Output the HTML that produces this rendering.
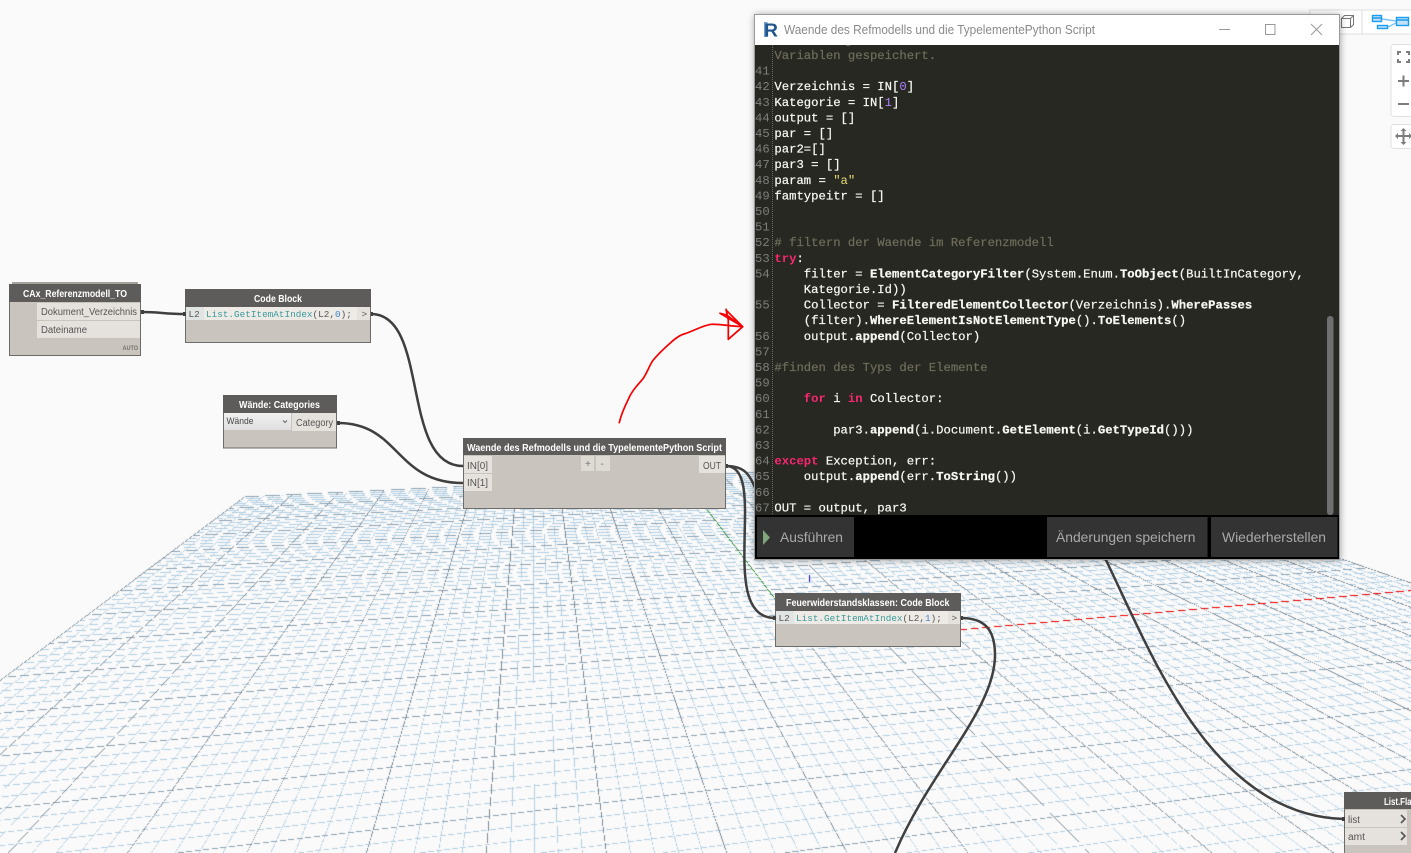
<!DOCTYPE html>
<html lang="de">
<head>
<meta charset="utf-8">
<title>Dynamo Python Script</title>
<style>
html,body{margin:0;padding:0;width:1411px;height:853px;overflow:hidden;background:#fafafa}
canvas,svg{position:absolute;left:0;top:0;display:block}
svg text{font-family:"Liberation Sans",sans-serif;white-space:pre}
.t{font-size:10px;font-weight:bold;fill:#fff}
.p{font-size:10px;fill:#555}
.m{font-family:"Liberation Mono",monospace!important;font-size:9.36px}
.c{font-family:"Liberation Mono",monospace!important;font-size:12.25px;fill:#f8f8f2;stroke:#f8f8f2;stroke-width:.22}
.b{font-weight:bold}
.n{fill:#7e7e7c;stroke:none}
.g{fill:#6e6c5a;stroke:#6e6c5a}
.k{fill:#f92672;stroke:none;font-weight:bold}
.v{fill:#ae81ff;stroke:none}
.s{fill:#e6db74;stroke:none}
.y{fill:#3a9a9a}
.u{fill:#3f87c4}
.btn{font-size:14px;fill:#aaa}
</style>
</head>
<body>
<canvas id="g" width="1411" height="853"></canvas>
<svg width="1411" height="853" viewBox="0 0 1411 853" xmlns="http://www.w3.org/2000/svg">
<defs>
<filter id="sh" x="-5%" y="-5%" width="110%" height="110%"><feGaussianBlur stdDeviation="4"/></filter>
<clipPath id="ed"><rect x="755" y="45" width="584" height="470"/></clipPath>
<linearGradient id="dd" x1="0" y1="0" x2="0" y2="1"><stop offset="0" stop-color="#f1f1f1"/><stop offset="1" stop-color="#dfdfdf"/></linearGradient>
</defs>

<!-- wires -->
<g fill="none" stroke="#3f3f3f" stroke-width="2.5">
<path d="M142,312 C160,312 165,314 185,314"/>
<path d="M371,314 C430,314 400,466 463,466"/>
<path d="M338,423 C400,423 395,483 463,483"/>
<path d="M726,466 C770,466 715,618 775,618"/>
<path d="M726,466 C745,466 750,475 756,490"/>
<path d="M1105,558 C1150,650 1210,815 1344,819"/>
<path d="M961,618 C985,618 995,630 995,655 C995,710 930,770 895,853"/>
</g>

<!-- top right toolbar -->
<rect x="1310" y="10" width="110" height="24" fill="#fff" stroke="#ddd"/>
<line x1="1362" y1="10" x2="1362" y2="34" stroke="#ddd"/>
<g fill="none" stroke="#777" stroke-width="1">
<path d="M1341.5,18.5 h9 v9 h-9 z M1341.5,18.5 l3,-3 h9 v9 l-3,3 M1350.5,18.5 l3,-3"/>
</g>
<g stroke="#1a9cf0" stroke-width="1.400" fill="#c3e0f6">
<path d="M1382,19 L1396,21 M1388,27 L1396,23" fill="none" stroke="#7cc4f4"/>
<rect x="1372.5" y="15.5" width="9" height="6"/>
<rect x="1377.5" y="25.5" width="10" height="3"/>
<rect x="1396.5" y="17.5" width="12" height="8"/>
<path d="M1372.5,18 h9 M1396.5,20 h12" fill="none"/>
</g>
<rect x="1391" y="44.5" width="30" height="72" rx="3" fill="#fff" stroke="#e0e0e0"/>
<rect x="1391" y="124.5" width="30" height="24" rx="3" fill="#fff" stroke="#e0e0e0"/>
<g fill="none" stroke="#7d7d7d" stroke-width="2">
<path d="M1398,55 v-3 h3 M1406,52 h3 v3 M1409,59 v3 h-3 M1401,62 h-3 v-3"/>
<path d="M1398,81 h11 M1403.5,75.500 v11"/>
<path d="M1398,104 h11"/>
<path d="M1397,136 h13 M1403.500,130 v12"/>
</g>
<path d="M1403.5,128 l3,3 h-6 z M1403.5,145 l3,-3 h-6 z M1395,136 l3,-3 v6 z M1412,136 l-3,-3 v6 z" fill="#7d7d7d"/>

<!-- red sketch arrow -->
<g fill="none" stroke="#f40000" stroke-width="1.700" stroke-linecap="round" stroke-linejoin="round">
<path d="M619.300,422.700 C621,415 625,406 628,400 C632,390 638,385 643.300,378.300 C648,371 650,364 653.300,360 C660,352 666,347 671.700,341.700 C676,338 680,335 684,334 C694,331 703,325 711.700,324.300 C720,324 732,326.500 742.700,326.700 L728.300,339.300 L728.300,320 L726,309.300"/>
<path d="M742.700,326.700 L726.700,315 L720,313.300 L742.700,326.700 M742.700,326.700 L727,311"/>
</g>

<!-- CAx node -->
<rect x="12" y="282" width="126" height="2" fill="#a5a29c"/>
<rect x="9.500" y="284.500" width="131" height="71" fill="#c9c5be" stroke="#6e6c68"/>
<rect x="9" y="284" width="132" height="18" fill="#5e5c5a"/>
<rect x="37" y="303" width="103" height="17" fill="#e5e1dc"/>
<rect x="37" y="321" width="103" height="17" fill="#e5e1dc"/>
<text class="t" x="23" y="297" textLength="104" lengthAdjust="spacingAndGlyphs">CAx_Referenzmodell_TO</text>
<text class="p" x="41" y="315" textLength="96" lengthAdjust="spacingAndGlyphs">Dokument_Verzeichnis</text>
<text class="p" x="41" y="333" textLength="46" lengthAdjust="spacingAndGlyphs">Dateiname</text>
<text x="122.500" y="350" font-size="6" font-weight="bold" fill="#75726d" textLength="15.500" lengthAdjust="spacingAndGlyphs">AUTO</text>
<rect x="141" y="310" width="3" height="4" fill="#3f3f3f"/>

<!-- Code block -->
<rect x="185.500" y="289.500" width="185" height="53" fill="#c9c5be" stroke="#6e6c68"/>
<rect x="185" y="289" width="186" height="18" fill="#5e5c5a"/>
<rect x="186" y="307" width="184" height="13" fill="#e5e1dc"/>
<rect x="186" y="307" width="18" height="13" fill="#e0e4e2"/>
<rect x="204" y="307" width="153" height="13" fill="#eeebe7"/>
<text class="t" x="254" y="302" textLength="48" lengthAdjust="spacingAndGlyphs">Code Block</text>
<text class="m" x="188.500" y="317" fill="#555">L2</text>
<text class="m" x="206" y="317" fill="#555"><tspan class="y">List.GetItemAtIndex</tspan>(L2,<tspan class="u">0</tspan>);</text>
<text class="m" x="361.500" y="317" fill="#555">&gt;</text>
<rect x="183" y="312" width="3" height="4" fill="#3f3f3f"/>
<rect x="371" y="312" width="2" height="4" fill="#3f3f3f"/>

<!-- Waende -->
<rect x="223.500" y="395.500" width="113" height="52.500" fill="#c9c5be" stroke="#6e6c68"/>
<rect x="223" y="395" width="114" height="18" fill="#5e5c5a"/>
<rect x="224" y="413" width="67" height="17" fill="url(#dd)"/>
<rect x="292" y="413" width="44" height="18" fill="#e5e1dc"/>
<text class="t" x="239" y="408" textLength="81" lengthAdjust="spacingAndGlyphs">Wände: Categories</text>
<text x="226.500" y="424" font-size="9.500" fill="#444" textLength="27" lengthAdjust="spacingAndGlyphs">Wände</text>
<path d="M283,420.500 l2,2 l2,-2" fill="none" stroke="#666"/>
<text class="p" x="296" y="426" textLength="37" lengthAdjust="spacingAndGlyphs">Category</text>
<rect x="337" y="421" width="3" height="4" fill="#3f3f3f"/>

<!-- Python node -->
<rect x="463.500" y="438.500" width="262" height="70" fill="#c9c5be" stroke="#6e6c68"/>
<rect x="463" y="438" width="263" height="17" fill="#5e5c5a"/>
<rect x="464" y="456" width="28" height="17" fill="#e5e1dc"/>
<rect x="464" y="474" width="28" height="17" fill="#e5e1dc"/>
<rect x="699" y="456" width="26" height="17" fill="#e5e1dc"/>
<rect x="581" y="456" width="13" height="15" fill="#dedad4"/>
<rect x="596" y="456" width="14" height="15" fill="#dedad4"/>
<text class="t" x="467" y="451" textLength="255" lengthAdjust="spacingAndGlyphs">Waende des Refmodells und die TypelementePython Script</text>
<text class="p" x="467" y="469" textLength="21" lengthAdjust="spacingAndGlyphs">IN[0]</text>
<text class="p" x="467" y="486" textLength="21" lengthAdjust="spacingAndGlyphs">IN[1]</text>
<text class="p" x="703" y="469" textLength="18" lengthAdjust="spacingAndGlyphs">OUT</text>
<text x="585" y="467" font-size="10" fill="#777">+</text>
<text x="600.500" y="467" font-size="10" fill="#777">-</text>
<rect x="726" y="464" width="2" height="4" fill="#3f3f3f"/>

<!-- Feuer node -->
<rect x="775.500" y="593.500" width="185" height="53" fill="#c9c5be" stroke="#6e6c68"/>
<rect x="775" y="593" width="186" height="18" fill="#5e5c5a"/>
<rect x="776" y="611" width="184" height="13" fill="#e5e1dc"/>
<rect x="776" y="611" width="18" height="13" fill="#e0e4e2"/>
<rect x="794" y="611" width="154" height="13" fill="#eeebe7"/>
<text class="t" x="786" y="606" textLength="163.500" lengthAdjust="spacingAndGlyphs">Feuerwiderstandsklassen: Code Block</text>
<text class="m" x="778.500" y="621" fill="#555">L2</text>
<text class="m" x="796" y="621" fill="#555"><tspan class="y">List.GetItemAtIndex</tspan>(L2,<tspan class="u">1</tspan>);</text>
<text class="m" x="951.500" y="621" fill="#555">&gt;</text>
<rect x="773" y="616" width="3" height="4" fill="#3f3f3f"/>
<rect x="961" y="616" width="2" height="4" fill="#3f3f3f"/>

<!-- List node -->
<rect x="1344.500" y="792.500" width="80" height="70" fill="#c9c5be" stroke="#6e6c68"/>
<rect x="1344" y="792" width="67" height="17" fill="#5e5c5a"/>
<rect x="1345" y="810" width="62" height="17" fill="#e5e1dc"/>
<rect x="1345" y="828" width="62" height="17" fill="#e5e1dc"/>
<text class="t" x="1384" y="805" textLength="42" lengthAdjust="spacingAndGlyphs">List.Flatten</text>
<text class="p" x="1348" y="823" textLength="12" lengthAdjust="spacingAndGlyphs">list</text>
<text class="p" x="1348" y="840" textLength="17" lengthAdjust="spacingAndGlyphs">amt</text>
<path d="M1401,815 l4,4 l-4,4 M1401,832 l4,4 l-4,4" fill="none" stroke="#555" stroke-width="1.600"/>
<rect x="1342" y="817" width="3" height="4" fill="#3f3f3f"/>

<!-- Window -->
<rect x="755" y="15" width="585" height="545" fill="#000" opacity=".4" filter="url(#sh)"/>
<rect x="754.500" y="14.500" width="585" height="545" fill="#000" stroke="#9a9a9a"/>
<rect x="755" y="15" width="584" height="30" fill="#fff"/>
<rect x="755" y="45" width="584" height="470" fill="#272822"/>
<rect x="764" y="22" width="3.500" height="15" fill="#6f9fcf"/>
<text x="764" y="36.500" font-size="18" font-weight="bold" fill="#21568f" textLength="14" lengthAdjust="spacingAndGlyphs">R</text>
<text x="784" y="34" font-size="12.500" fill="#8a8a8a" textLength="311" lengthAdjust="spacingAndGlyphs">Waende des Refmodells und die TypelementePython Script</text>
<g fill="none" stroke="#999" stroke-width="1">
<path d="M1219,29.500 h11"/>
<rect x="1265.500" y="24.500" width="9.500" height="10"/>
<path d="M1311,24 l11,11 M1322,24 l-11,11"/>
</g>

<g clip-path="url(#ed)">
<line x1="772.500" y1="45" x2="772.500" y2="515" stroke="#6a6a62" stroke-dasharray="1 1"/>
<text class="c g" x="844.500" y="43.400">g</text>
<text class="c g" x="774.400" y="59">Variablen gespeichert.</text>
<text class="c n" x="755" y="74.600">41</text>
<text class="c n" x="755" y="90.200">42</text>
<text class="c" x="774.400" y="90.200">Verzeichnis = IN[<tspan class="v">0</tspan>]</text>
<text class="c n" x="755" y="105.800">43</text>
<text class="c" x="774.400" y="105.800">Kategorie = IN[<tspan class="v">1</tspan>]</text>
<text class="c n" x="755" y="121.400">44</text>
<text class="c" x="774.400" y="121.400">output = []</text>
<text class="c n" x="755" y="137">45</text>
<text class="c" x="774.400" y="137">par = []</text>
<text class="c n" x="755" y="152.600">46</text>
<text class="c" x="774.400" y="152.600">par2=[]</text>
<text class="c n" x="755" y="168.200">47</text>
<text class="c" x="774.400" y="168.200">par3 = []</text>
<text class="c n" x="755" y="183.800">48</text>
<text class="c" x="774.400" y="183.800">param = <tspan class="s">"a"</tspan></text>
<text class="c n" x="755" y="199.400">49</text>
<text class="c" x="774.400" y="199.400">famtypeitr = []</text>
<text class="c n" x="755" y="215">50</text>
<text class="c n" x="755" y="230.600">51</text>
<text class="c n" x="755" y="246.200">52</text>
<text class="c g" x="774.400" y="246.200"># filtern der Waende im Referenzmodell</text>
<text class="c n" x="755" y="261.800">53</text>
<text class="c" x="774.400" y="261.800"><tspan class="k">try</tspan>:</text>
<text class="c n" x="755" y="277.400">54</text>
<text class="c" x="803.800" y="277.400">filter = <tspan class="b">ElementCategoryFilter</tspan>(System.Enum.<tspan class="b">ToObject</tspan>(BuiltInCategory,</text>
<text class="c" x="803.800" y="293">Kategorie.Id))</text>
<text class="c n" x="755" y="308.600">55</text>
<text class="c" x="803.800" y="308.600">Collector = <tspan class="b">FilteredElementCollector</tspan>(Verzeichnis).<tspan class="b">WherePasses</tspan></text>
<text class="c" x="803.800" y="324.200">(filter).<tspan class="b">WhereElementIsNotElementType</tspan>().<tspan class="b">ToElements</tspan>()</text>
<text class="c n" x="755" y="339.800">56</text>
<text class="c" x="803.800" y="339.800">output.<tspan class="b">append</tspan>(Collector)</text>
<text class="c n" x="755" y="355.400">57</text>
<text class="c n" x="755" y="371">58</text>
<text class="c g" x="774.400" y="371">#finden des Typs der Elemente</text>
<text class="c n" x="755" y="386.600">59</text>
<text class="c n" x="755" y="402.200">60</text>
<text class="c" x="803.800" y="402.200"><tspan class="k">for</tspan> i <tspan class="k">in</tspan> Collector:</text>
<text class="c n" x="755" y="417.800">61</text>
<text class="c n" x="755" y="433.400">62</text>
<text class="c" x="833.200" y="433.400">par3.<tspan class="b">append</tspan>(i.Document.<tspan class="b">GetElement</tspan>(i.<tspan class="b">GetTypeId</tspan>()))</text>
<text class="c n" x="755" y="449">63</text>
<text class="c n" x="755" y="464.600">64</text>
<text class="c" x="774.400" y="464.600"><tspan class="k">except</tspan> Exception, err:</text>
<text class="c n" x="755" y="480.200">65</text>
<text class="c" x="803.800" y="480.200">output.<tspan class="b">append</tspan>(err.<tspan class="b">ToString</tspan>())</text>
<text class="c n" x="755" y="495.800">66</text>
<text class="c n" x="755" y="511.400">67</text>
<text class="c" x="774.400" y="511.400">OUT = output, par3</text>
<rect x="1327" y="316" width="6.500" height="199" rx="3" fill="#6f6f6f"/>
</g>

<rect x="755" y="515" width="584" height="44" fill="#000"/>
<rect x="757" y="517" width="97" height="40" fill="#333"/>
<rect x="1047" y="517" width="160.500" height="40" fill="#333"/>
<rect x="1211" y="517" width="126.500" height="40" fill="#333"/>
<path d="M763,530 L770,537.500 L763,545 Z" fill="#7fa57d"/>
<text class="btn" x="780" y="542" textLength="63" lengthAdjust="spacingAndGlyphs">Ausführen</text>
<text class="btn" x="1056" y="542" textLength="139.500" lengthAdjust="spacingAndGlyphs">Änderungen speichern</text>
<text class="btn" x="1222" y="542" textLength="104" lengthAdjust="spacingAndGlyphs">Wiederherstellen</text>
</svg>
<script>
(function(){
var W=1411,H=853,c=document.getElementById('g'),x=c.getContext('2d');
var im=x.createImageData(W,H),D=im.data;
for(var i=0;i<D.length;i+=4){D[i]=250;D[i+1]=250;D[i+2]=250;D[i+3]=255}
var k1=.01704,k2=.00324;
function P(u,v){var d=1+u*k1+v*k2;return [(809+u*k1*533+v*k2*5250)/d,(643+u*k1*280+v*k2*257)/d,d]}
function set(a,b,col){if(a<0||b<0||a>=W||b>=H)return;var o=(b*W+a)*4;D[o]=col[0];D[o+1]=col[1];D[o+2]=col[2]}
function line(p,q,col,skip){
 var dx=q[0]-p[0],dy=q[1]-p[1],t,f,a,b,s,e;
 if(Math.abs(dx)>Math.abs(dy)){
  s=Math.max(0,Math.ceil(Math.min(p[0],q[0])));e=Math.min(W-1,Math.floor(Math.max(p[0],q[0])));
  for(a=s;a<=e;a++){t=p[1]+(a-p[0])*dy/dx;b=Math.floor(t);f=t-b;if(f<skip)continue;set(a,b,col)}
 }else{
  s=Math.max(0,Math.ceil(Math.min(p[1],q[1])));e=Math.min(H-1,Math.floor(Math.max(p[1],q[1])));
  for(b=s;b<=e;b++){t=p[0]+(b-p[1])*dx/dy;a=Math.floor(t);f=t-a;if(f<skip)continue;set(a,b,col)}
 }
}
var VP=[533,280];
function A(v,col,skip){
 var p=P(50,v),t=(H+10-VP[1])/(p[1]-VP[1]);
 line(p,[VP[0]+(p[0]-VP[0])*t,H+10],col,skip);
}
function B(u,col,skip){
 var p=P(u,-50),q=P(u,50);
 if(p[2]<.03||q[2]<.03)return;
 line(p,q,col,skip);
}
var mi=[180,208,226],ma=[140,163,180],da=[122,138,152];
var u,v;
for(v=-50;v<=50;v+=1)if(v%5)A(v,mi,.25);
for(u=50;u>=-47;u-=1)if(u%5)B(u,mi,.3);
for(u=50;u>=-45;u-=5)B(u,ma,.3);
for(v=-50;v<=50;v+=5)A(v,da,.2);
line(P(0,0),P(50,0),[0,120,0],.25);
line(P(0,0),P(0,50),[240,0,0],.32);
for(var y=575;y<582;y++)set(809,y,[20,20,225]);
x.putImageData(im,0,0);
})();
</script>
</body>
</html>
